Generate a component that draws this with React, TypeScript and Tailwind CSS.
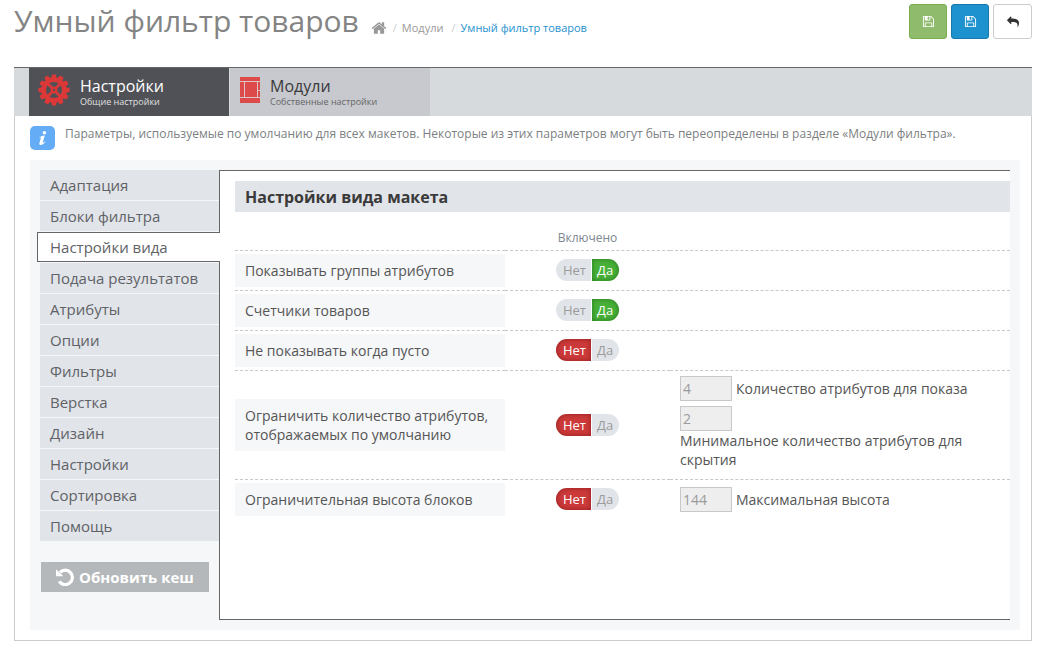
import { useState } from "react";
import type { ReactNode } from "react";

function HomeIcon() {
  return (
    <svg viewBox="0 0 1792 1792" className="size-4 fill-current" aria-hidden="true">
      <path d="M1472 992v480q0 26-19 45t-45 19h-384v-384h-256v384h-384q-26 0-45-19t-19-45v-480q0-1 .5-3t.5-3l575-474 575 474q1 2 1 6zm223-69l-62 74q-8 9-21 11h-3q-13 0-21-7l-692-577-692 577q-12 8-24 7-13-2-21-11l-62-74q-8-10-7-23.5t11-21.5l719-599q32-26 76-26t76 26l244 204v-195q0-14 9-23t23-9h192q14 0 23 9t9 23v408l219 182q10 8 11 21.5t-7 23.5z" />
    </svg>
  );
}

function SaveIcon() {
  return (
    <svg viewBox="0 0 1792 1792" className="size-[13px] fill-current" aria-hidden="true">
      <path d="M512 1536h768v-384h-768v384zm896 0h128v-896q0-14-10-38.5t-20-34.5l-281-281q-10-10-34-20t-39-10v416q0 40-28 68t-68 28h-576q-40 0-68-28t-28-68v-416h-128v1280h128v-416q0-40 28-68t68-28h832q40 0 68 28t28 68v416zm-384-928v-320q0-13-9.5-22.5t-22.5-9.5h-192q-13 0-22.5 9.5t-9.5 22.5v320q0 13 9.5 22.5t22.5 9.5h192q13 0 22.5-9.5t9.5-22.5zm640 32v928q0 40-28 68t-68 28h-1344q-40 0-68-28t-28-68v-1344q0-40 28-68t68-28h928q40 0 88 20t76 48l280 280q28 28 48 76t20 88z" />
    </svg>
  );
}

function ReplyIcon() {
  return (
    <svg viewBox="0 0 1792 1792" className="size-3 fill-current" aria-hidden="true">
      <path
        transform="translate(1792 0) scale(-1 1)"
        d="M1792 640q0 26-19 45l-512 512q-19 19-45 19t-45-19-19-45v-256h-224q-98 0-175.5 6t-154 21.5-133 42.5-105.5 69.5-80 101-48.5 138.5-17.5 181q0 55 5 123 0 6 2.5 23.5t2.5 26.5q0 15-8.5 25t-23.5 10q-16 0-28-17-7-9-13-22t-13.5-30-10.5-24q-127-285-127-451 0-199 53-333 162-403 875-403h224v-256q0-26 19-45t45-19 45 19l512 512q19 19 19 45z"
      />
    </svg>
  );
}

const teeth = Array.from({ length: 12 }, (_, i) => i * 30);

function GearIcon() {
  return (
    <svg viewBox="-16 -16 32 32" className="size-8 shrink-0" fill="none" stroke="#dc3838" aria-hidden="true">
      <circle r="10.3" strokeWidth="4.6" />
      <circle r="2.3" strokeWidth="2.4" />
      {teeth.map((a) => (
        <path key={a} d="M-2.7 -11.5L-2 -15.6H2L2.7 -11.5Z" transform={`rotate(${a})`} fill="#dc3838" stroke="none" />
      ))}
      <path d="M-2.2 -2.2L-7 -7M2.2 -2.2L7 -7M-2.2 2.2L-7 7M2.2 2.2L7 7" strokeWidth="2.8" />
    </svg>
  );
}

function LayoutIcon() {
  return (
    <svg viewBox="0 0 20 26" className="h-[26px] w-5 shrink-0" aria-hidden="true">
      <rect width="20" height="26" fill="#dc4a4a" />
      <path d="M0 4.5H20M0 20.5H20M4.5 4V20M17.5 4V20M17.5 13.5H20" stroke="#dfc3c7" strokeWidth="1" fill="none" />
    </svg>
  );
}

function InfoIcon() {
  return (
    <svg viewBox="0 0 25 24" className="h-6 w-[25px] shrink-0" aria-hidden="true">
      <rect width="25" height="24" rx="5" fill="#64adf6" />
      <circle cx="14.4" cy="6.8" r="1.7" fill="#fff" />
      <path d="M9.4 11.4C11 10.4 12.4 9.8 14.8 9.6L12.7 16.6C12.6 17.1 13 17.1 14.9 15.6L15.4 16.1C13.6 18.2 12 19 10.8 19C9.4 19 9.1 18.1 9.4 17L10.9 11.9C11 11.4 10.7 11.4 9.5 12Z" fill="#fff" />
    </svg>
  );
}

function RefreshIcon() {
  return (
    <svg viewBox="0 0 18 18" className="size-[18px]" fill="none" aria-hidden="true">
      <path d="M4 4.4A7.2 7.2 0 1 1 3.2 13.4" stroke="#fff" strokeWidth="3.2" />
      <path d="M0 1.2V8.2H7.4Z" fill="#fff" />
    </svg>
  );
}

const sections = [
  "Адаптация",
  "Блоки фильтра",
  "Настройки вида",
  "Подача результатов",
  "Атрибуты",
  "Опции",
  "Фильтры",
  "Верстка",
  "Дизайн",
  "Настройки",
  "Сортировка",
  "Помощь",
];

function Toggle({ name, label, initial }: { name: string; label: string; initial: boolean }) {
  const [on, setOn] = useState(initial);
  const idle = "bg-[#e1e4e9] text-[#9b9b9b]";
  return (
    <div role="radiogroup" aria-label={label} className="relative flex justify-center gap-px text-[13px] leading-[22px]">
      <label className={`w-[35px] cursor-pointer rounded-l-full pr-[5px] text-right ${on ? idle : "bg-[#cc3a3a] text-white shadow-[inset_0_0_5px_rgba(90,0,0,0.5)]"}`}>
        <input type="radio" name={name} className="sr-only" checked={!on} onChange={() => setOn(false)} />
        Нет
      </label>
      <label className={`w-[27px] cursor-pointer rounded-r-full pl-[5px] text-left ${on ? "bg-[#48b038] text-white shadow-[inset_0_0_5px_rgba(0,70,0,0.5)]" : idle}`}>
        <input type="radio" name={name} className="sr-only" checked={on} onChange={() => setOn(true)} />
        Да
      </label>
    </div>
  );
}

function NumberField({ id, value, children }: { id: string; value: string; children: ReactNode }) {
  return (
    <div className="flex flex-wrap items-center gap-x-1">
      <input
        id={id}
        type="text"
        defaultValue={value}
        disabled
        className="h-[25px] w-[52px] border border-[#c8c8c8] bg-[#eeeeee] px-0.5 text-sm text-[#9b9b9b]"
      />
      <label htmlFor={id}>{children}</label>
    </div>
  );
}

function SettingRow({ name, label, on = false, children }: { name: string; label: string; on?: boolean; children?: ReactNode }) {
  return (
    <tr className="border-t border-dashed border-[#c6c8cb]">
      <th scope="row" className="py-[3px] text-left font-normal">
        <div className="bg-[#f5f7f9] px-2.5 py-[7px]">{label}</div>
      </th>
      <td>
        <Toggle name={name} label={label} initial={on} />
      </td>
      <td className="px-2.5">{children}</td>
    </tr>
  );
}

export default function App() {
  const [active, setActive] = useState(2);
  return (
    <div className="bg-white pr-[13px] pb-3 pl-[14px] font-['Open_Sans',sans-serif]">
      <header className="flex items-start justify-between pt-1">
        <div className="flex items-end gap-3">
          <h1 className="text-[30px] leading-[34px] text-[#848484]">Умный фильтр товаров</h1>
          <nav aria-label="Навигация" className="flex items-center pb-0.5 text-[11px] leading-4 text-[#999999]">
            <a href="#home" aria-label="Главная">
              <HomeIcon />
            </a>
            <span className="pr-[5px] pl-1.5 text-[#cccccc]">/</span>
            <a href="#modules">Модули</a>
            <span className="pr-[5px] pl-2 text-[#cccccc]">/</span>
            <a href="#filter" className="text-[#1e91cf]">Умный фильтр товаров</a>
          </nav>
        </div>
        <div className="flex gap-1">
          <button aria-label="Сохранить" className="flex h-[35px] w-[38px] items-center justify-center rounded-[3px] border border-[#7aae50] bg-[#8fbb6c] text-white">
            <SaveIcon />
          </button>
          <button aria-label="Сохранить и закрыть" className="flex h-[35px] w-[38px] items-center justify-center rounded-[3px] border border-[#1978ab] bg-[#1e91cf] text-white">
            <SaveIcon />
          </button>
          <button aria-label="Назад" className="flex h-[35px] w-[39px] items-center justify-center rounded-[3px] border border-[#cccccc] bg-white text-[#333333]">
            <ReplyIcon />
          </button>
        </div>
      </header>

      <main className="mt-7">
        <nav aria-label="Разделы" className="flex gap-px border-t border-[#666666] bg-[#d6dadd] pl-[15px]">
          <a href="#settings" className="flex h-12 w-[200px] items-center gap-2.5 bg-[#4f5156] pb-1 pl-[9px] text-white">
            <GearIcon />
            <span className="pt-1">
              <span className="block text-base leading-5">Настройки</span>
              <span className="block text-[9px] leading-3 text-[#e0e0e0]">Общие настройки</span>
            </span>
          </a>
          <a href="#own" className="flex h-12 w-[200px] items-center gap-2.5 bg-[#c7c9ce] pb-1 pl-2.5 text-[#3a3a3a]">
            <LayoutIcon />
            <span className="pt-1">
              <span className="block text-base leading-5">Модули</span>
              <span className="block text-[9px] leading-3 text-[#666666]">Собственные настройки</span>
            </span>
          </a>
        </nav>

        <div className="border border-t-0 border-[#cccccc] pr-[11px] pb-2.5 pl-[15px]">
          <div className="flex h-11 gap-2.5 pt-2.5">
            <InfoIcon />
            <p className="text-xs leading-4 text-[#7c7f82]">
              Параметры, используемые по умолчанию для всех макетов. Некоторые из этих параметров могут быть переопределены в разделе «Модули фильтра».
            </p>
          </div>

          <div className="flex bg-[#f5f7f9] p-2.5">
            <aside className="w-[179px] shrink-0">
              <ul className="flex flex-col gap-px">
                {sections.map((s, i) => (
                  <li key={s}>
                    <button
                      onClick={() => setActive(i)}
                      className={
                        i === active
                          ? "relative -ml-[3px] block h-[30px] w-[183px] border border-r-0 border-[#666666] bg-white pl-3 text-left text-[15px] text-[#5f6266]"
                          : "block h-[30px] w-full bg-[#e1e4e9] pl-2.5 text-left text-[15px] text-[#5f6266]"
                      }
                    >
                      {s}
                    </button>
                  </li>
                ))}
              </ul>
              <button className="mt-[21px] ml-px flex h-[30px] w-[168px] items-center justify-center gap-[5px] bg-[#b5b8bb] text-[15px] font-bold text-white">
                <RefreshIcon />
                Обновить кеш
              </button>
            </aside>

            <section className="min-h-[450px] flex-1 border border-r-0 border-[#666666] bg-white pt-2.5 pl-[15px]">
              <h2 className="bg-[#e1e4e9] px-2.5 pt-px text-base leading-[30px] font-bold text-[#3a3a3a]">Настройки вида макета</h2>
              <table className="w-full table-fixed border-collapse text-sm leading-[19px] text-[#555555]">
                <thead>
                  <tr className="h-[38px] align-bottom text-xs text-[#7c8790]">
                    <td className="w-[270px]" />
                    <th scope="col" className="w-[165px] pb-1 font-normal">Включено</th>
                    <td />
                  </tr>
                </thead>
                <tbody>
                  <SettingRow name="groups" label="Показывать группы атрибутов" on />
                  <SettingRow name="counters" label="Счетчики товаров" on />
                  <SettingRow name="empty" label="Не показывать когда пусто" />
                  <SettingRow name="limit" label="Ограничить количество атрибутов, отображаемых по умолчанию">
                    <div className="flex flex-col gap-[5px] pt-[5px] pb-2.5">
                      <NumberField id="show" value="4">Количество атрибутов для показа</NumberField>
                      <NumberField id="hide" value="2">Минимальное количество атрибутов для скрытия</NumberField>
                    </div>
                  </SettingRow>
                  <SettingRow name="height" label="Ограничительная высота блоков">
                    <NumberField id="max" value="144">Максимальная высота</NumberField>
                  </SettingRow>
                </tbody>
              </table>
            </section>
          </div>
        </div>
      </main>
    </div>
  );
}
